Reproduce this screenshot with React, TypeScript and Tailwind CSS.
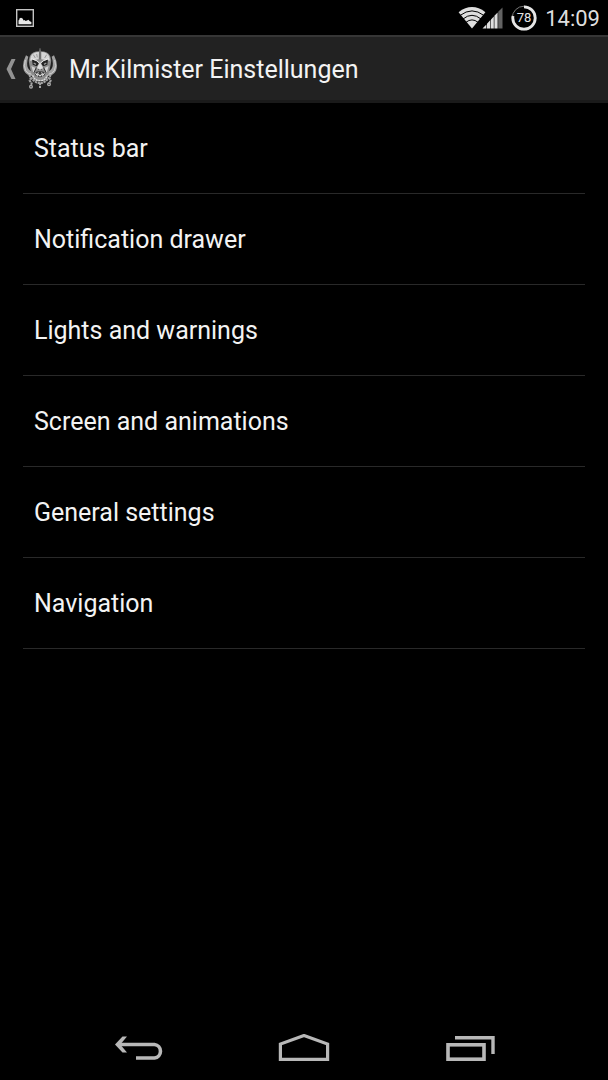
const sections = [
  "Status bar",
  "Notification drawer",
  "Lights and warnings",
  "Screen and animations",
  "General settings",
  "Navigation",
];

function PictureIcon() {
  return (
    <svg width="18" height="18" viewBox="0 0 18 18" aria-hidden="true">
      <rect x="0.7" y="0.7" width="16.6" height="16.6" fill="none" stroke="#c4c4c4" strokeWidth="1.4" />
      <path d="M2.5 15.2V11.4L3.4 10.6V9.6L5 8.8L6.6 9.4L7.6 11.4L8.6 11L9.6 12L11 11.6L12.4 10.8L13.8 12.2L15.4 13V15.2Z" fill="#e8e8e8" />
    </svg>
  );
}

function WifiIcon() {
  return (
    <svg width="28" height="22" viewBox="0 0 28 22" aria-hidden="true">
      <path d="M14 21.5L0.6 5.2Q14-5 27.4 5.2Z" fill="#dedede" />
      <path
        d="M2.2 8.4Q14-0.6 25.8 8.4M5 12Q14 4.6 23 12M7.8 15.4Q14 10.4 20.2 15.4"
        fill="none"
        stroke="#000"
        strokeWidth="1"
      />
    </svg>
  );
}

function SignalIcon() {
  return (
    <svg width="21" height="22" viewBox="0 0 21 22" aria-hidden="true">
      <path d="M0.5 21.5L4.4 17.4V21.5ZM5 21.5V16.7L8.4 13V21.5ZM9 21.5V12.4L11.8 9.4V21.5ZM12.4 21.5V8.8L15.6 5.4V21.5Z" fill="#dedede" />
      <path d="M16.2 21.5V4.8L20.5 0.4V21.5Z" fill="#626262" />
    </svg>
  );
}

function BatteryIcon() {
  return (
    <svg width="26" height="26" viewBox="0 0 26 26" role="img" aria-label="78 %">
      <circle cx="13" cy="13" r="11.8" fill="none" stroke="#777" strokeWidth="1" />
      <circle
        cx="13"
        cy="13"
        r="11.2"
        fill="none"
        stroke="#e6e6e6"
        strokeWidth="2.8"
        pathLength="100"
        strokeDasharray="78 22"
        transform="rotate(-90 13 13)"
      />
      <text x="13" y="17" textAnchor="middle" fontSize="13" fontFamily="Roboto, sans-serif" fill="#e6e6e6">
        78
      </text>
    </svg>
  );
}

function SkullIcon() {
  return (
    <svg width="36" height="42" viewBox="12 12 108 126" aria-hidden="true">
      {/* tusks */}
      <path d="M24 34Q10 62 18 80Q28 98 50 96L50 84Q34 84 29 70Q25 56 31 38Z" fill="#a0a0a0" />
      <path d="M108 34Q122 62 114 80Q104 98 82 96L82 84Q98 84 103 70Q107 56 101 38Z" fill="#a0a0a0" />
      <path d="M22 48Q16 66 23 80Q30 91 46 92M110 48Q116 66 109 80Q102 91 86 92" fill="none" stroke="#d0d0d0" strokeWidth="3" />
      {/* helmet */}
      <path d="M66 12L69 22Q88 22 95 34Q102 46 98 62L94 80L88 106L76 112H56L44 106L38 80L34 62Q30 46 37 34Q44 22 63 22Z" fill="#8c8c8c" />
      <path d="M63 24Q44 24 38 38L36 50L62 46ZM70 24Q88 24 94 38L96 50L70 46Z" fill="#d6d6d6" />
      <path d="M66 12V46" stroke="#555" strokeWidth="3" />
      <path d="M46 32L52 42M86 32L80 42M56 30L58 40" stroke="#999" strokeWidth="3" />
      {/* eyes and cheeks */}
      <path d="M42 46L58 53L63 60L56 67L44 62ZM74 53L90 46L88 62L76 67L69 60Z" fill="#222" />
      <path d="M47 57L54 61M85 57L78 61" stroke="#999" strokeWidth="4" />
      <path d="M40 44L56 50L63 56M92 44L76 50L69 56" fill="none" stroke="#eee" strokeWidth="3" />
      <path d="M66 52L56 74L66 79L76 74Z" fill="#dcdcdc" />
      <path d="M40 66L53 72L46 86ZM92 66L79 72L86 86Z" fill="#d0d0d0" />
      <path d="M55 71L48 86M77 71L84 86M60 74L64 78M72 74L68 78" stroke="#333" strokeWidth="3" />
      {/* mouth */}
      <path d="M49 86Q66 78 83 86L78 97Q66 102 54 97Z" fill="#3a3a3a" />
      <path d="M52 86L57 94L61 85M71 85L75 94L80 86M57 98L62 91L66 97L70 91L75 98" fill="none" stroke="#e4e4e4" strokeWidth="3" />
      <path d="M44 94Q50 110 66 110Q82 110 88 94" fill="none" stroke="#ddd" strokeWidth="4" strokeDasharray="6 2" />
      {/* chains */}
      <path
        d="M34 92L38 102L35 110L41 118L38 126M98 92L94 102L98 110L93 118M38 100Q50 116 66 118Q82 116 94 100M66 116V134"
        fill="none"
        stroke="#a4a4a4"
        strokeWidth="6"
        strokeDasharray="7 2"
      />
      <circle cx="39" cy="128" r="4" fill="none" stroke="#aaa" strokeWidth="4" />
      <circle cx="93" cy="121" r="4" fill="none" stroke="#aaa" strokeWidth="4" />
    </svg>
  );
}

export default function App() {
  return (
    <div className="flex min-h-screen flex-col bg-black font-[Roboto,sans-serif] text-[#f3f3f3]">
      <div className="flex h-[35px] items-center justify-between pr-2 pl-4">
        <PictureIcon />
        <div className="flex items-center">
          <WifiIcon />
          <span className="-ml-1">
            <SignalIcon />
          </span>
          <span className="ml-2">
            <BatteryIcon />
          </span>
          <time className="ml-2 pt-0.5 text-[22px] leading-8 text-[#dedede]">14:09</time>
        </div>
      </div>

      <header className="flex h-[68px] items-center border-t-2 border-b-3 border-t-[#363636] border-b-[#1a1a1a] bg-[#222222] pl-1.5">
        <button className="flex items-center" aria-label="Zurück">
          <svg width="10" height="20" viewBox="0 0 10 20" aria-hidden="true">
            <path d="M5.5 0H9.5L5 10L9.5 20H5.5L0.5 10Z" fill="#929292" />
          </svg>
          <span className="ml-1.5">
            <SkullIcon />
          </span>
        </button>
        <h1 className="ml-[11px] pt-0.5 text-[25px] leading-8">Mr.Kilmister Einstellungen</h1>
      </header>

      <main className="flex-1 px-[23px]">
        <ul>
          {sections.map((name) => (
            <li key={name} className="border-b border-[#292929]">
              <button className="h-[90px] w-full px-[11px] pt-0.5 text-left text-[25px] leading-8">
                {name}
              </button>
            </li>
          ))}
        </ul>
      </main>

      <nav className="flex h-16 items-center justify-center gap-[114px]">
        <button aria-label="Back">
          <svg width="52" height="28" viewBox="0 0 52 28" fill="none" stroke="#b8b8b8" strokeWidth="3.6" aria-hidden="true">
            <path d="M6 10.5H42.5A6.8 6.8 0 0 1 42.5 24H24" />
            <path d="M3 10.5L10.5 2.5H15L8.3 10.5L15 18.5H10.5Z" fill="#b8b8b8" stroke="none" />
          </svg>
        </button>
        <button aria-label="Home">
          <svg width="52" height="28" viewBox="0 0 52 28" fill="none" stroke="#b8b8b8" strokeWidth="3.2" aria-hidden="true">
            <path d="M2.4 25.3V10L26 1.5L49.6 10V25.3Z" />
          </svg>
        </button>
        <button aria-label="Recent apps">
          <svg width="52" height="28" viewBox="0 0 52 28" fill="none" stroke="#b8b8b8" aria-hidden="true">
            <rect x="4" y="10.8" width="36" height="14.4" strokeWidth="3.6" />
            <path d="M11 3.8H49V20" strokeWidth="3.4" />
          </svg>
        </button>
      </nav>
    </div>
  );
}
